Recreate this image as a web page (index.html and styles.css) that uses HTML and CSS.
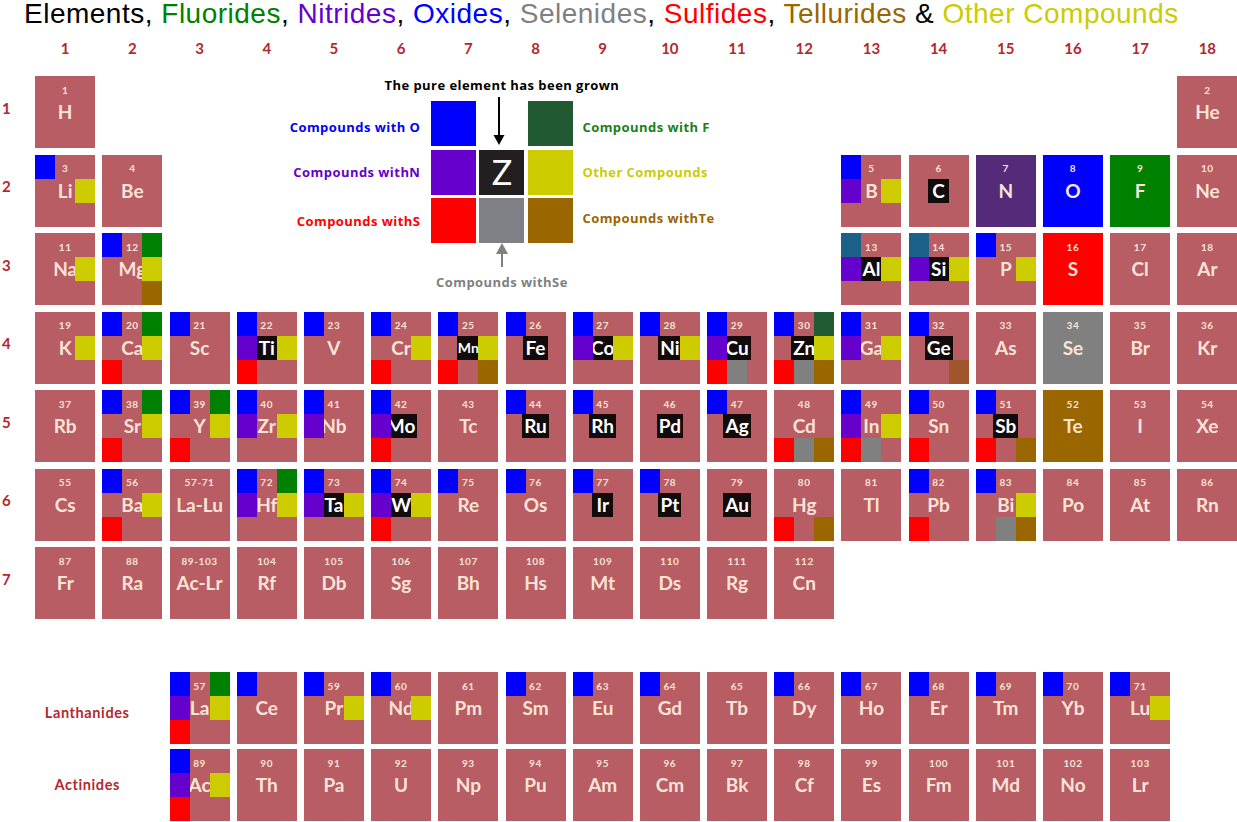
FILE: index.html
```html
<!DOCTYPE html>
<html lang="en">
<head>
<meta charset="utf-8">
<title>Elements and Compounds</title>
<link rel="stylesheet" href="styles.css">
</head>
<body>
<div class="page">
  <h1 class="title">Elements, <span class="t-f">Fluorides</span>, <span class="t-n">Nitrides</span>, <span class="t-o">Oxides</span>, <span class="t-se">Selenides</span>, <span class="t-s">Sulfides</span>, <span class="t-te">Tellurides</span> &amp; <span class="t-x">Other Compounds</span></h1>

  <div class="groups">
    <span>1</span><span>2</span><span>3</span><span>4</span><span>5</span><span>6</span><span>7</span><span>8</span><span>9</span><span>10</span><span>11</span><span>12</span><span>13</span><span>14</span><span>15</span><span>16</span><span>17</span><span>18</span>
  </div>

  <div class="table">
    <div class="legend">
      <div class="lg-head">The pure element has been grown</div>
      <div class="lg-grid">
        <div class="lg-l lg-top c-o">Compounds with O</div>
        <div class="lg-sq l-o"></div>
        <div class="lg-arrow"><svg width="45" height="49" viewBox="0 0 45 49"><line x1="20" y1="0" x2="20" y2="40" stroke="#000" stroke-width="2"/><polygon points="14.5,38 25.5,38 20,48" fill="#000"/></svg></div>
        <div class="lg-sq l-f"></div>
        <div class="lg-r lg-top c-f">Compounds with F</div>

        <div class="lg-l c-n">Compounds withN</div>
        <div class="lg-sq l-n"></div>
        <div class="lg-sq lg-z">Z</div>
        <div class="lg-sq l-x"></div>
        <div class="lg-r c-x">Other Compounds</div>

        <div class="lg-l c-s">Compounds withS</div>
        <div class="lg-sq l-s"></div>
        <div class="lg-sq l-se"></div>
        <div class="lg-sq l-te"></div>
        <div class="lg-r lg-bot c-te">Compounds withTe</div>
      </div>
      <div class="lg-up"><svg width="14" height="24" viewBox="0 0 14 24"><polygon points="1,11 13,11 7,0" fill="#808080"/><line x1="7" y1="10" x2="7" y2="24" stroke="#808080" stroke-width="2"/></svg></div>
      <div class="lg-se">Compounds withSe</div>
    </div>

    <!-- Row 1 -->
    <div class="rl">1</div>
    <div class="el"><span class="n">1</span><span class="s">H</span></div>
    <div class="el c18"><span class="n">2</span><span class="s">He</span></div>

    <!-- Row 2 -->
    <div class="rl">2</div>
    <div class="el"><span class="n">3</span><span class="s">Li</span><span class="q o"></span><span class="q x"></span></div>
    <div class="el"><span class="n">4</span><span class="s">Be</span></div>
    <div class="el c13"><span class="n">5</span><span class="s">B</span><span class="q o"></span><span class="q n2"></span><span class="q x"></span></div>
    <div class="el"><span class="n">6</span><span class="s p">C</span></div>
    <div class="el bN"><span class="n">7</span><span class="s">N</span></div>
    <div class="el bO"><span class="n">8</span><span class="s">O</span></div>
    <div class="el bF"><span class="n">9</span><span class="s">F</span></div>
    <div class="el"><span class="n">10</span><span class="s">Ne</span></div>

    <!-- Row 3 -->
    <div class="rl">3</div>
    <div class="el"><span class="n">11</span><span class="s">Na</span><span class="q x"></span></div>
    <div class="el"><span class="n">12</span><span class="s">Mg</span><span class="q o"></span><span class="q f"></span><span class="q x"></span><span class="q te"></span></div>
    <div class="el c13"><span class="n">13</span><span class="s p">Al</span><span class="q o2"></span><span class="q n2"></span><span class="q x"></span></div>
    <div class="el"><span class="n">14</span><span class="s p">Si</span><span class="q o2"></span><span class="q n2"></span><span class="q x"></span></div>
    <div class="el"><span class="n">15</span><span class="s">P</span><span class="q o"></span><span class="q x"></span></div>
    <div class="el bS"><span class="n">16</span><span class="s">S</span></div>
    <div class="el"><span class="n">17</span><span class="s">Cl</span></div>
    <div class="el"><span class="n">18</span><span class="s">Ar</span></div>

    <!-- Row 4 -->
    <div class="rl">4</div>
    <div class="el"><span class="n">19</span><span class="s">K</span><span class="q x"></span></div>
    <div class="el"><span class="n">20</span><span class="s">Ca</span><span class="q o"></span><span class="q f"></span><span class="q x"></span><span class="q s2"></span></div>
    <div class="el"><span class="n">21</span><span class="s">Sc</span><span class="q o"></span></div>
    <div class="el"><span class="n">22</span><span class="s p">Ti</span><span class="q o"></span><span class="q n2"></span><span class="q x"></span><span class="q s2"></span></div>
    <div class="el"><span class="n">23</span><span class="s">V</span><span class="q o"></span></div>
    <div class="el"><span class="n">24</span><span class="s">Cr</span><span class="q o"></span><span class="q x"></span><span class="q s2"></span></div>
    <div class="el"><span class="n">25</span><span class="s p sm">Mn</span><span class="q o"></span><span class="q x"></span><span class="q s2"></span><span class="q te"></span></div>
    <div class="el"><span class="n">26</span><span class="s p">Fe</span><span class="q o"></span></div>
    <div class="el"><span class="n">27</span><span class="s p">Co</span><span class="q o"></span><span class="q n2"></span><span class="q x"></span></div>
    <div class="el"><span class="n">28</span><span class="s p">Ni</span><span class="q o"></span><span class="q x"></span></div>
    <div class="el"><span class="n">29</span><span class="s p">Cu</span><span class="q o"></span><span class="q n2"></span><span class="q s2"></span><span class="q se"></span></div>
    <div class="el"><span class="n">30</span><span class="s p">Zn</span><span class="q o"></span><span class="q f2"></span><span class="q x"></span><span class="q s2"></span><span class="q se"></span><span class="q te"></span></div>
    <div class="el"><span class="n">31</span><span class="s">Ga</span><span class="q o"></span><span class="q n2"></span><span class="q x"></span></div>
    <div class="el"><span class="n">32</span><span class="s p">Ge</span><span class="q o"></span><span class="q te2"></span></div>
    <div class="el"><span class="n">33</span><span class="s">As</span></div>
    <div class="el bSe"><span class="n">34</span><span class="s">Se</span></div>
    <div class="el"><span class="n">35</span><span class="s">Br</span></div>
    <div class="el"><span class="n">36</span><span class="s">Kr</span></div>

    <!-- Row 5 -->
    <div class="rl">5</div>
    <div class="el"><span class="n">37</span><span class="s">Rb</span></div>
    <div class="el"><span class="n">38</span><span class="s">Sr</span><span class="q o"></span><span class="q f"></span><span class="q x"></span><span class="q s2"></span></div>
    <div class="el"><span class="n">39</span><span class="s">Y</span><span class="q o"></span><span class="q f"></span><span class="q x"></span><span class="q s2"></span></div>
    <div class="el"><span class="n">40</span><span class="s">Zr</span><span class="q o"></span><span class="q n2"></span><span class="q x"></span></div>
    <div class="el"><span class="n">41</span><span class="s">Nb</span><span class="q o"></span><span class="q n2"></span></div>
    <div class="el"><span class="n">42</span><span class="s p">Mo</span><span class="q o"></span><span class="q n2"></span><span class="q s2"></span></div>
    <div class="el"><span class="n">43</span><span class="s">Tc</span></div>
    <div class="el"><span class="n">44</span><span class="s p">Ru</span><span class="q o"></span></div>
    <div class="el"><span class="n">45</span><span class="s p">Rh</span><span class="q o"></span></div>
    <div class="el"><span class="n">46</span><span class="s p">Pd</span></div>
    <div class="el"><span class="n">47</span><span class="s p">Ag</span><span class="q o"></span></div>
    <div class="el"><span class="n">48</span><span class="s">Cd</span><span class="q s2"></span><span class="q se"></span><span class="q te"></span></div>
    <div class="el"><span class="n">49</span><span class="s">In</span><span class="q o"></span><span class="q n2"></span><span class="q x"></span><span class="q s2"></span><span class="q se"></span></div>
    <div class="el"><span class="n">50</span><span class="s">Sn</span><span class="q o"></span><span class="q s2"></span></div>
    <div class="el"><span class="n">51</span><span class="s p">Sb</span><span class="q o"></span><span class="q s2"></span><span class="q te"></span></div>
    <div class="el bTe"><span class="n">52</span><span class="s">Te</span></div>
    <div class="el"><span class="n">53</span><span class="s">I</span></div>
    <div class="el"><span class="n">54</span><span class="s">Xe</span></div>

    <!-- Row 6 -->
    <div class="rl">6</div>
    <div class="el"><span class="n">55</span><span class="s">Cs</span></div>
    <div class="el"><span class="n">56</span><span class="s">Ba</span><span class="q o"></span><span class="q x"></span><span class="q s2"></span></div>
    <div class="el"><span class="n">57-71</span><span class="s">La-Lu</span></div>
    <div class="el"><span class="n">72</span><span class="s">Hf</span><span class="q o"></span><span class="q f"></span><span class="q n2"></span><span class="q x"></span></div>
    <div class="el"><span class="n">73</span><span class="s p">Ta</span><span class="q o"></span><span class="q n2"></span><span class="q x"></span></div>
    <div class="el"><span class="n">74</span><span class="s p">W</span><span class="q o"></span><span class="q n2"></span><span class="q x"></span><span class="q s2"></span></div>
    <div class="el"><span class="n">75</span><span class="s">Re</span><span class="q o"></span></div>
    <div class="el"><span class="n">76</span><span class="s">Os</span><span class="q o"></span></div>
    <div class="el"><span class="n">77</span><span class="s p">Ir</span><span class="q o"></span></div>
    <div class="el"><span class="n">78</span><span class="s p">Pt</span><span class="q o"></span></div>
    <div class="el"><span class="n">79</span><span class="s p">Au</span></div>
    <div class="el"><span class="n">80</span><span class="s">Hg</span><span class="q s2"></span><span class="q te"></span></div>
    <div class="el"><span class="n">81</span><span class="s">Tl</span></div>
    <div class="el"><span class="n">82</span><span class="s">Pb</span><span class="q o"></span><span class="q s2"></span></div>
    <div class="el"><span class="n">83</span><span class="s">Bi</span><span class="q o"></span><span class="q x"></span><span class="q se"></span><span class="q te"></span></div>
    <div class="el"><span class="n">84</span><span class="s">Po</span></div>
    <div class="el"><span class="n">85</span><span class="s">At</span></div>
    <div class="el"><span class="n">86</span><span class="s">Rn</span></div>

    <!-- Row 7 -->
    <div class="rl">7</div>
    <div class="el"><span class="n">87</span><span class="s">Fr</span></div>
    <div class="el"><span class="n">88</span><span class="s">Ra</span></div>
    <div class="el"><span class="n">89-103</span><span class="s">Ac-Lr</span></div>
    <div class="el"><span class="n">104</span><span class="s">Rf</span></div>
    <div class="el"><span class="n">105</span><span class="s">Db</span></div>
    <div class="el"><span class="n">106</span><span class="s">Sg</span></div>
    <div class="el"><span class="n">107</span><span class="s">Bh</span></div>
    <div class="el"><span class="n">108</span><span class="s">Hs</span></div>
    <div class="el"><span class="n">109</span><span class="s">Mt</span></div>
    <div class="el"><span class="n">110</span><span class="s">Ds</span></div>
    <div class="el"><span class="n">111</span><span class="s">Rg</span></div>
    <div class="el"><span class="n">112</span><span class="s">Cn</span></div>
  </div>

  <div class="fblock">
    <div class="fl fl-la">Lanthanides</div>
    <div class="el"><span class="n">57</span><span class="s">La</span><span class="q o"></span><span class="q f"></span><span class="q n2"></span><span class="q x"></span><span class="q s2"></span></div>
    <div class="el"><span class="s">Ce</span><span class="q o"></span></div>
    <div class="el"><span class="n">59</span><span class="s">Pr</span><span class="q o"></span><span class="q x"></span></div>
    <div class="el"><span class="n">60</span><span class="s">Nd</span><span class="q o"></span><span class="q x"></span></div>
    <div class="el"><span class="n">61</span><span class="s">Pm</span></div>
    <div class="el"><span class="n">62</span><span class="s">Sm</span><span class="q o"></span></div>
    <div class="el"><span class="n">63</span><span class="s">Eu</span><span class="q o"></span></div>
    <div class="el"><span class="n">64</span><span class="s">Gd</span><span class="q o"></span></div>
    <div class="el"><span class="n">65</span><span class="s">Tb</span></div>
    <div class="el"><span class="n">66</span><span class="s">Dy</span><span class="q o"></span></div>
    <div class="el"><span class="n">67</span><span class="s">Ho</span><span class="q o"></span></div>
    <div class="el"><span class="n">68</span><span class="s">Er</span><span class="q o"></span></div>
    <div class="el"><span class="n">69</span><span class="s">Tm</span><span class="q o"></span></div>
    <div class="el"><span class="n">70</span><span class="s">Yb</span><span class="q o"></span></div>
    <div class="el"><span class="n">71</span><span class="s">Lu</span><span class="q o"></span><span class="q x"></span></div>

    <div class="fl fl-ac">Actinides</div>
    <div class="el"><span class="n">89</span><span class="s">Ac</span><span class="q o"></span><span class="q n2"></span><span class="q x"></span><span class="q s2"></span></div>
    <div class="el"><span class="n">90</span><span class="s">Th</span></div>
    <div class="el"><span class="n">91</span><span class="s">Pa</span></div>
    <div class="el"><span class="n">92</span><span class="s">U</span></div>
    <div class="el"><span class="n">93</span><span class="s">Np</span></div>
    <div class="el"><span class="n">94</span><span class="s">Pu</span></div>
    <div class="el"><span class="n">95</span><span class="s">Am</span></div>
    <div class="el"><span class="n">96</span><span class="s">Cm</span></div>
    <div class="el"><span class="n">97</span><span class="s">Bk</span></div>
    <div class="el"><span class="n">98</span><span class="s">Cf</span></div>
    <div class="el"><span class="n">99</span><span class="s">Es</span></div>
    <div class="el"><span class="n">100</span><span class="s">Fm</span></div>
    <div class="el"><span class="n">101</span><span class="s">Md</span></div>
    <div class="el"><span class="n">102</span><span class="s">No</span></div>
    <div class="el"><span class="n">103</span><span class="s">Lr</span></div>
  </div>
</div>
</body>
</html>
```

FILE: styles.css
```css
* { box-sizing: border-box; }

body {
  margin: 0;
  background: #ffffff;
  font-family: Lato, "Open Sans", sans-serif;
}

.page { width: 1237px; }

/* Title */
.title {
  margin: 0;
  height: 36px;
  padding-left: 24px;
  font: 400 28px/28px "Liberation Sans", Arial, sans-serif;
  letter-spacing: 0.5px;
  white-space: nowrap;
  color: #000;
}
.t-f { color: #008000; }
.t-n { color: #6600cc; }
.t-o { color: #0000ff; }
.t-se { color: #808080; }
.t-s { color: #ff0000; }
.t-te { color: #996600; }
.t-x { color: #cccc00; }

/* Group numbers */
.groups {
  display: grid;
  grid-template-columns: repeat(18, 60px);
  column-gap: 7.2px;
  padding-left: 35.2px;
  height: 24px;
}
.groups span {
  text-align: center;
  font: 700 15px/24px Lato, sans-serif;
  color: #b3282f;
}

/* Main table */
.table {
  margin-top: 16px;
  display: grid;
  grid-template-columns: 28px repeat(18, 60px);
  grid-template-rows: repeat(7, 72px);
  column-gap: 7.2px;
  row-gap: 6.5px;
}
.rl {
  align-self: center;
  padding: 0 0 8px 2px;
  font: 700 15px/1 Lato, sans-serif;
  color: #b3282f;
}
.c13 { grid-column: 14; }
.c18 { grid-column: 19; }

/* Element tile */
.el {
  display: grid;
  grid-template-columns: repeat(3, 1fr);
  grid-template-rows: repeat(3, 1fr);
  background: #b75d63;
  color: #fae3d7;
}
.el .n {
  grid-area: 1 / 1 / 2 / 4;
  justify-self: center;
  align-self: center;
  padding-top: 3px;
  font: 700 10px/1 Lato, sans-serif;
  letter-spacing: 0.6px;
}
.el .s {
  grid-area: 2 / 1 / 3 / 4;
  justify-self: center;
  font: 700 19px/24px Lato, sans-serif;
  white-space: nowrap;
}
.el .s.p {
  background: #120b0b;
  color: #ffffff;
  padding: 0 2px;
  min-width: 21px;
  text-align: center;
}
.el .s.sm { font-size: 14px; padding: 0 1px; }

.bN { background: #552a78; }
.bO { background: #0000ff; }
.bF { background: #008000; }
.bS { background: #ff0000; }
.bSe { background: #808080; }
.bTe { background: #996600; }

/* Compound markers */
.q.o { grid-area: 1 / 1; background: #0000ff; }
.q.o2 { grid-area: 1 / 1; background: #1b6088; }
.q.f { grid-area: 1 / 3; background: #008000; }
.q.f2 { grid-area: 1 / 3; background: #215b33; }
.q.n2 { grid-area: 2 / 1; background: #6600cc; }
.q.x { grid-area: 2 / 3; background: #cccc00; }
.q.s2 { grid-area: 3 / 1; background: #ff0000; }
.q.se { grid-area: 3 / 2; background: #808080; }
.q.te { grid-area: 3 / 3; background: #996600; }
.q.te2 { grid-area: 3 / 3; background: #a0562a; }

/* Legend */
.legend {
  grid-column: 4 / 14;
  grid-row: 1 / 4;
  display: flex;
  flex-direction: column;
  align-items: center;
  font: 700 13px/18px "Open Sans", sans-serif;
  letter-spacing: 0.45px;
}
.lg-head {
  height: 18px;
  margin-bottom: 7px;
  color: #000;
  white-space: nowrap;
}
.lg-grid {
  width: 100%;
  display: grid;
  grid-template-columns: 1fr 45px 45px 45px 1fr;
  grid-template-rows: repeat(3, 45px);
  gap: 3.5px;
}
.lg-l {
  align-self: center;
  text-align: right;
  padding-right: 7px;
  white-space: nowrap;
}
.lg-r {
  align-self: center;
  text-align: left;
  padding-left: 6px;
  white-space: nowrap;
}
.lg-top { padding-top: 6px; }
.lg-bot { padding-bottom: 6px; }
.lg-arrow { margin-top: -4px; }
.lg-arrow svg { display: block; }
.lg-z {
  background: #231f20;
  color: #ffffff;
  display: flex;
  align-items: center;
  justify-content: center;
  font: 400 34px/1 Lato, sans-serif;
  letter-spacing: 0;
}
.l-o { background: #0000ff; }
.l-f { background: #215a32; }
.l-n { background: #6600cc; }
.l-x { background: #cccc00; }
.l-s { background: #ff0000; }
.l-se { background: #808186; }
.l-te { background: #996600; }
.c-o { color: #0000ff; }
.c-f { color: #1a7f1a; }
.c-n { color: #6600cc; }
.c-x { color: #cccc00; }
.c-s { color: #ff0000; }
.c-te { color: #996600; }
.lg-up { height: 24px; }
.lg-up svg { display: block; }
.lg-se {
  margin-top: 6px;
  color: #808080;
  white-space: nowrap;
}

/* f-block */
.fblock {
  margin-top: 53px;
  display: grid;
  grid-template-columns: 28px repeat(18, 60px);
  grid-template-rows: repeat(2, 72px);
  column-gap: 7.2px;
  row-gap: 5px;
}
.fl {
  grid-column: 1 / 4;
  align-self: center;
  text-align: center;
  padding-left: 12px;
  font: 700 14.5px/18px Lato, sans-serif;
  letter-spacing: 0.6px;
  color: #b3282f;
}
.fl-la { padding-top: 10px; }
```
